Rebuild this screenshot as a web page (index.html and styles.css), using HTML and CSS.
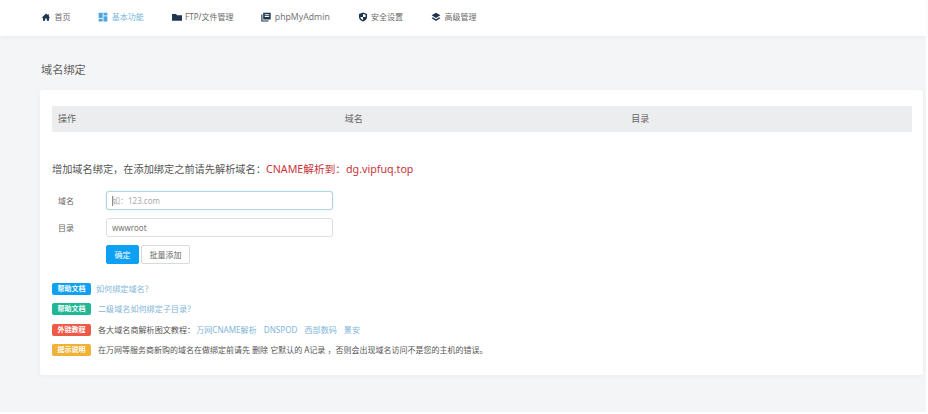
FILE: index.html
```html
<!DOCTYPE html>
<html lang="zh-CN">
<head>
<meta charset="utf-8">
<title>域名绑定</title>
<link rel="stylesheet" href="styles.css">
</head>
<body>
<div class="app">
  <nav class="nav">
    <a class="nav-item"><svg class="ico" viewBox="0 0 16 16"><path d="M8 2.500 1.500 8.600l.8.9.9-.8V14h3.500v-3.500h2.600V14h3.500V8.700l.9.8.8-.9-2-1.900V3.500h-1.800v1.400z"/></svg>首页</a>
    <a class="nav-item nav-active"><svg class="ico" viewBox="0 0 16 16"><path d="M1 1h6.500v8.500H1zM8.800 1H15v4.500H8.800zM8.800 6.800H15V15H8.800zM1 10.800h6.500V15H1z"/></svg>基本功能</a>
    <a class="nav-item"><svg class="ico" viewBox="0 0 16 16"><path d="M0 3h6.500l1.500 2h8v9H0z"/></svg>FTP/文件管理</a>
    <a class="nav-item nav-latin"><svg class="ico" viewBox="0 0 16 16"><path d="M3.500 1H15.500v11H3.500zM6 3.500V5h7V3.500zM6 6.500V8h7V6.500zM.5 4H2.300v9.500H12V15H.5z"/></svg>phpMyAdmin</a>
    <a class="nav-item"><svg class="ico" viewBox="0 0 16 16"><path fill-rule="evenodd" d="M8 .8l6.500 2.400V8c0 3.600-2.800 6.200-6.500 7.200C4.300 14.200 1.500 11.600 1.500 8V3.200zM8 3v5H3.900c.3 2.400 1.900 4 4.100 4.900V8h4.100V4.500z"/></svg>安全设置</a>
    <a class="nav-item"><svg class="ico" viewBox="0 0 16 16"><path d="M8 1l7 4.200-7 4.200-7-4.200zM2.900 8.500 8 11.500l5.100-3L15 9.800l-7 4.700-7-4.700z"/></svg>高级管理</a>
  </nav>
  <main class="main">
    <h1 class="page-title">域名绑定</h1>
    <section class="card">
      <div class="table-head">
        <div class="th">操作</div>
        <div class="th">域名</div>
        <div class="th">目录</div>
      </div>
      <p class="intro">增加域名绑定，在添加绑定之前请先解析域名：<span class="red">CNAME解析到：dg.vipfuq.top</span></p>
      <form class="form">
        <div class="field">
          <label class="field-label">域名</label>
          <div class="input input-focus"><span class="caret"></span><span class="placeholder">如：123.com</span></div>
        </div>
        <div class="field">
          <label class="field-label">目录</label>
          <div class="input"><span class="value">wwwroot</span></div>
        </div>
        <div class="actions">
          <button type="button" class="btn btn-primary">确定</button>
          <button type="button" class="btn btn-default">批量添加</button>
        </div>
      </form>
      <ul class="notes">
        <li class="note"><span class="badge badge-blue">帮助文档</span><a class="link link-tight">如何绑定域名？</a></li>
        <li class="note"><span class="badge badge-green">帮助文档</span><a class="link">二级域名如何绑定子目录？</a></li>
        <li class="note"><span class="badge badge-red">外链教程</span><span class="txt">各大域名商解析图文教程：</span><a class="link link-first">万网CNAME解析</a><a class="link link-gap">DNSPOD</a><a class="link link-gap">西部数码</a><a class="link link-gap">景安</a></li>
        <li class="note note-long"><span class="badge badge-yellow">提示说明</span><span class="txt">在万网等服务商新购的域名在做绑定前请先 删除 它默认的 A记录 ，否则会出现域名访问不是您的主机的错误。</span></li>
      </ul>
    </section>
  </main>
</div>
</body>
</html>
```

FILE: styles.css
```css
* { box-sizing: border-box; }
html, body { margin: 0; padding: 0; background: #fff; }
body {
  font-family: "Noto Sans", "Noto Sans CJK TC", sans-serif;
  color: #555;
  overflow: hidden;
}
a { text-decoration: none; }
.app {
  width: 926px;
  height: 412px;
  background: #f4f5f6;
}
.nav {
  height: 36px;
  background: #fff;
  display: flex;
  align-items: center;
  gap: 27.800px;
  padding: 0 0 2px 41px;
  box-shadow: 0 1px 6px rgba(0, 0, 0, .05);
}
.nav-item {
  display: flex;
  align-items: center;
  gap: 3.500px;
  font-size: 8px;
  line-height: 12px;
  color: #6a6a6a;
  white-space: nowrap;
}
.nav-latin { font-size: 8.700px; color: #777; }
.ico {
  width: 10px;
  height: 10px;
  fill: #1f3550;
  flex: none;
}
.nav-active { color: #7ab8de; }
.nav-active .ico { fill: #4fa6dc; }
.main { padding: 0 3px 0 40px; }
.page-title {
  margin: 0;
  padding: 26px 0 0 1px;
  height: 54px;
  font-size: 11.200px;
  line-height: 16px;
  font-weight: 400;
  color: #5f5f5f;
}
.card {
  height: 285px;
  background: #fff;
  border-radius: 3px;
  padding: 16px 11px 0 12px;
  box-shadow: 0 1px 6px rgba(0, 0, 0, .04);
}
.table-head {
  display: grid;
  grid-template-columns: repeat(3, 1fr);
  height: 26px;
  background: #ecedef;
  align-items: center;
}
.th {
  padding-left: 6px;
  font-size: 9px;
  line-height: 12px;
  color: #666;
}
.intro {
  margin: 29px 0 0;
  font-size: 10.200px;
  line-height: 16px;
  color: #555;
  white-space: nowrap;
}
.red { color: #c8343a; font-size: 10.700px; }
.form { margin-top: 14px; }
.field {
  display: flex;
  align-items: center;
  height: 19px;
  margin-bottom: 8px;
}
.field-label {
  width: 54px;
  padding-left: 6px;
  font-size: 8px;
  line-height: 12px;
  color: #666;
}
.input {
  width: 227px;
  height: 19px;
  display: flex;
  align-items: center;
  padding-left: 5px;
  font-size: 8px;
  border: 1px solid #dcdfe3;
  border-radius: 3px;
  background: #fff;
}
.input-focus {
  border-color: #b0d6e0;
  box-shadow: 0 0 2px rgba(120, 190, 210, .35);
}
.caret {
  width: 1px;
  height: 10px;
  background: #8a8a8a;
  margin-right: -1px;
}
.placeholder { color: #aaa; }
.value { color: #777; }
.actions {
  display: flex;
  gap: 2px;
  padding-left: 54px;
}
.btn {
  height: 19px;
  margin: 0;
  padding: 0;
  font-family: inherit;
  font-size: 8px;
  line-height: 12px;
  border-radius: 2px;
}
.btn-primary {
  width: 33px;
  background: #0ea0f2;
  border: 1px solid #0ea0f2;
  color: #fff;
}
.btn-default {
  width: 49px;
  background: #fff;
  border: 1px solid #d8dade;
  color: #666;
}
.notes {
  list-style: none;
  margin: 19px 0 0;
  padding: 0;
}
.note {
  display: flex;
  align-items: center;
  height: 12px;
  margin-bottom: 8.300px;
  font-size: 8.100px;
  line-height: 12px;
  white-space: nowrap;
}
.note-long { font-size: 8px; }
.badge {
  width: 39px;
  height: 12px;
  margin-right: 7px;
  border-radius: 2px;
  color: #fff;
  font-size: 7px;
  font-weight: 700;
  line-height: 12px;
  text-align: center;
  flex: none;
}
.badge-blue { background: #0ea0f2; }
.badge-green { background: #20b795; }
.badge-red { background: #ef5a48; }
.badge-yellow { background: #efb136; }
.link { color: #7fb6d8; }
.link-tight { margin-left: -2px; }
.link-first { margin-left: 1px; }
.link-gap { margin-left: 7px; }
.txt { color: #555; }
```
